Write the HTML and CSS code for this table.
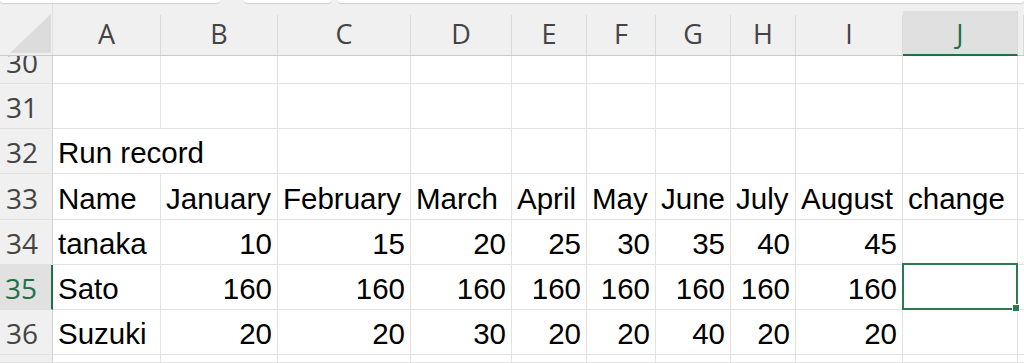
FILE: index.html
```html
<!DOCTYPE html>
<html>
<head>
<meta charset="utf-8">
<link rel="stylesheet" href="styles.css">
</head>
<body>
<div class="strip">
  <div class="tab t1"></div>
  <div class="tab t2"></div>
  <div class="tab t3"></div>
</div>
<div class="colheads">
  <div class="corner"><svg width="53" height="52" viewBox="0 0 53 52"><polygon points="10,50 51,11 51,50" fill="#dcdcdc"/></svg></div>
  <div class="ch">A</div>
  <div class="ch">B</div>
  <div class="ch">C</div>
  <div class="ch">D</div>
  <div class="ch">E</div>
  <div class="ch">F</div>
  <div class="ch">G</div>
  <div class="ch">H</div>
  <div class="ch">I</div>
  <div class="ch sel">J</div>
  <div class="ch"></div>
</div>
<div class="cells">
  <div class="rh clip">30</div>
  <div class="c"></div><div class="c"></div><div class="c"></div><div class="c"></div><div class="c"></div><div class="c"></div><div class="c"></div><div class="c"></div><div class="c"></div><div class="c"></div><div class="c"></div>

  <div class="rh">31</div>
  <div class="c"></div><div class="c"></div><div class="c"></div><div class="c"></div><div class="c"></div><div class="c"></div><div class="c"></div><div class="c"></div><div class="c"></div><div class="c"></div><div class="c"></div>

  <div class="rh">32</div>
  <div class="c span2">Run record</div><div class="c"></div><div class="c"></div><div class="c"></div><div class="c"></div><div class="c"></div><div class="c"></div><div class="c"></div><div class="c"></div><div class="c"></div>

  <div class="rh">33</div>
  <div class="c">Name</div><div class="c">January</div><div class="c">February</div><div class="c">March</div><div class="c">April</div><div class="c">May</div><div class="c">June</div><div class="c">July</div><div class="c">August</div><div class="c">change</div><div class="c"></div>

  <div class="rh">34</div>
  <div class="c">tanaka</div><div class="c num">10</div><div class="c num">15</div><div class="c num">20</div><div class="c num">25</div><div class="c num">30</div><div class="c num">35</div><div class="c num">40</div><div class="c num">45</div><div class="c"></div><div class="c"></div>

  <div class="rh sel">35</div>
  <div class="c">Sato</div><div class="c num">160</div><div class="c num">160</div><div class="c num">160</div><div class="c num">160</div><div class="c num">160</div><div class="c num">160</div><div class="c num">160</div><div class="c num">160</div><div class="c active"></div><div class="c"></div>

  <div class="rh">36</div>
  <div class="c">Suzuki</div><div class="c num">20</div><div class="c num">20</div><div class="c num">30</div><div class="c num">20</div><div class="c num">20</div><div class="c num">40</div><div class="c num">20</div><div class="c num">20</div><div class="c"></div><div class="c"></div>

  <div class="rh"></div>
  <div class="c"></div><div class="c"></div><div class="c"></div><div class="c"></div><div class="c"></div><div class="c"></div><div class="c"></div><div class="c"></div><div class="c"></div><div class="c"></div><div class="c"></div>
</div>
</body>
</html>
```

FILE: styles.css
```css
* { box-sizing: border-box; }

html, body {
  margin: 0;
  padding: 0;
}

body {
  width: 1024px;
  height: 363px;
  overflow: hidden;
  background: #ffffff;
}

.strip {
  display: flex;
  height: 3px;
  background: #f0f0f0;
  position: relative;
  z-index: 2;
}

.tab {
  height: 3px;
  background: #ffffff;
  border-radius: 0 0 5px 5px;
  box-shadow: 0 1px 1px rgba(0, 0, 0, 0.14);
}

.t1 { width: 220px; }
.t2 { width: 87px; margin-left: 24px; }
.t3 { flex: 1; margin-left: 7px; }

.colheads,
.cells {
  display: grid;
  grid-template-columns: 53px 108px 117px 133px 101px 75px 69px 75px 65px 107px 115px 1fr;
}

.colheads {
  height: 53px;
  background: #f0f0f0;
  border-bottom: 1px solid #c9c9c9;
}

.corner {
  align-self: stretch;
  border-right: 1px solid #e2e2e2;
}

.corner svg {
  display: block;
}

.ch {
  align-self: end;
  height: 40px;
  border-right: 1px solid #dadada;
  display: flex;
  justify-content: center;
  align-items: flex-start;
  padding-top: 5px;
  font-family: "Open Sans", "Noto Sans", sans-serif;
  font-size: 27px;
  line-height: 27px;
  color: #444444;
}

.ch.sel {
  height: 45px;
  margin-bottom: -1px;
  padding-top: 9px;
  background: #e0e0e0;
  color: #1e7145;
  border-bottom: 2px solid #1e7145;
}

.cells {
  height: 307px;
  grid-template-rows: 28px 45px 45px 46px 45px 45px 45px 8px;
  overflow: hidden;
}

.c {
  display: flex;
  align-items: flex-end;
  padding: 0 5px 6px 5px;
  border-right: 1px solid #e2e2e2;
  border-bottom: 1px solid #e2e2e2;
  font-family: "Liberation Sans", Arial, sans-serif;
  font-size: 29.5px;
  line-height: 1;
  color: #000000;
  white-space: nowrap;
}

.c.num {
  justify-content: flex-end;
}

.c.span2 {
  grid-column: span 2;
}

.c.active {
  position: relative;
}

.c.active::after {
  content: "";
  position: absolute;
  left: -1px;
  top: -2px;
  right: -1px;
  bottom: -1px;
  border: 2px solid #2a7a4e;
}

.c.active::before {
  content: "";
  position: absolute;
  right: -3px;
  bottom: -3px;
  width: 6px;
  height: 6px;
  background: #2a7a4e;
  border: 1px solid #ffffff;
  z-index: 1;
}

.rh {
  display: flex;
  justify-content: flex-end;
  align-items: flex-end;
  padding: 0 14px 7px 0;
  background: #f0f0f0;
  border-right: 1px solid #d2d2d2;
  border-bottom: 1px solid #e0e0e0;
  font-family: "Open Sans", "Noto Sans", sans-serif;
  font-size: 28px;
  line-height: 28px;
  color: #444444;
  overflow: hidden;
}

.rh.sel {
  background: #e1e1e1;
  color: #1e7145;
  border-right: 2px solid #1e7145;
}
```
